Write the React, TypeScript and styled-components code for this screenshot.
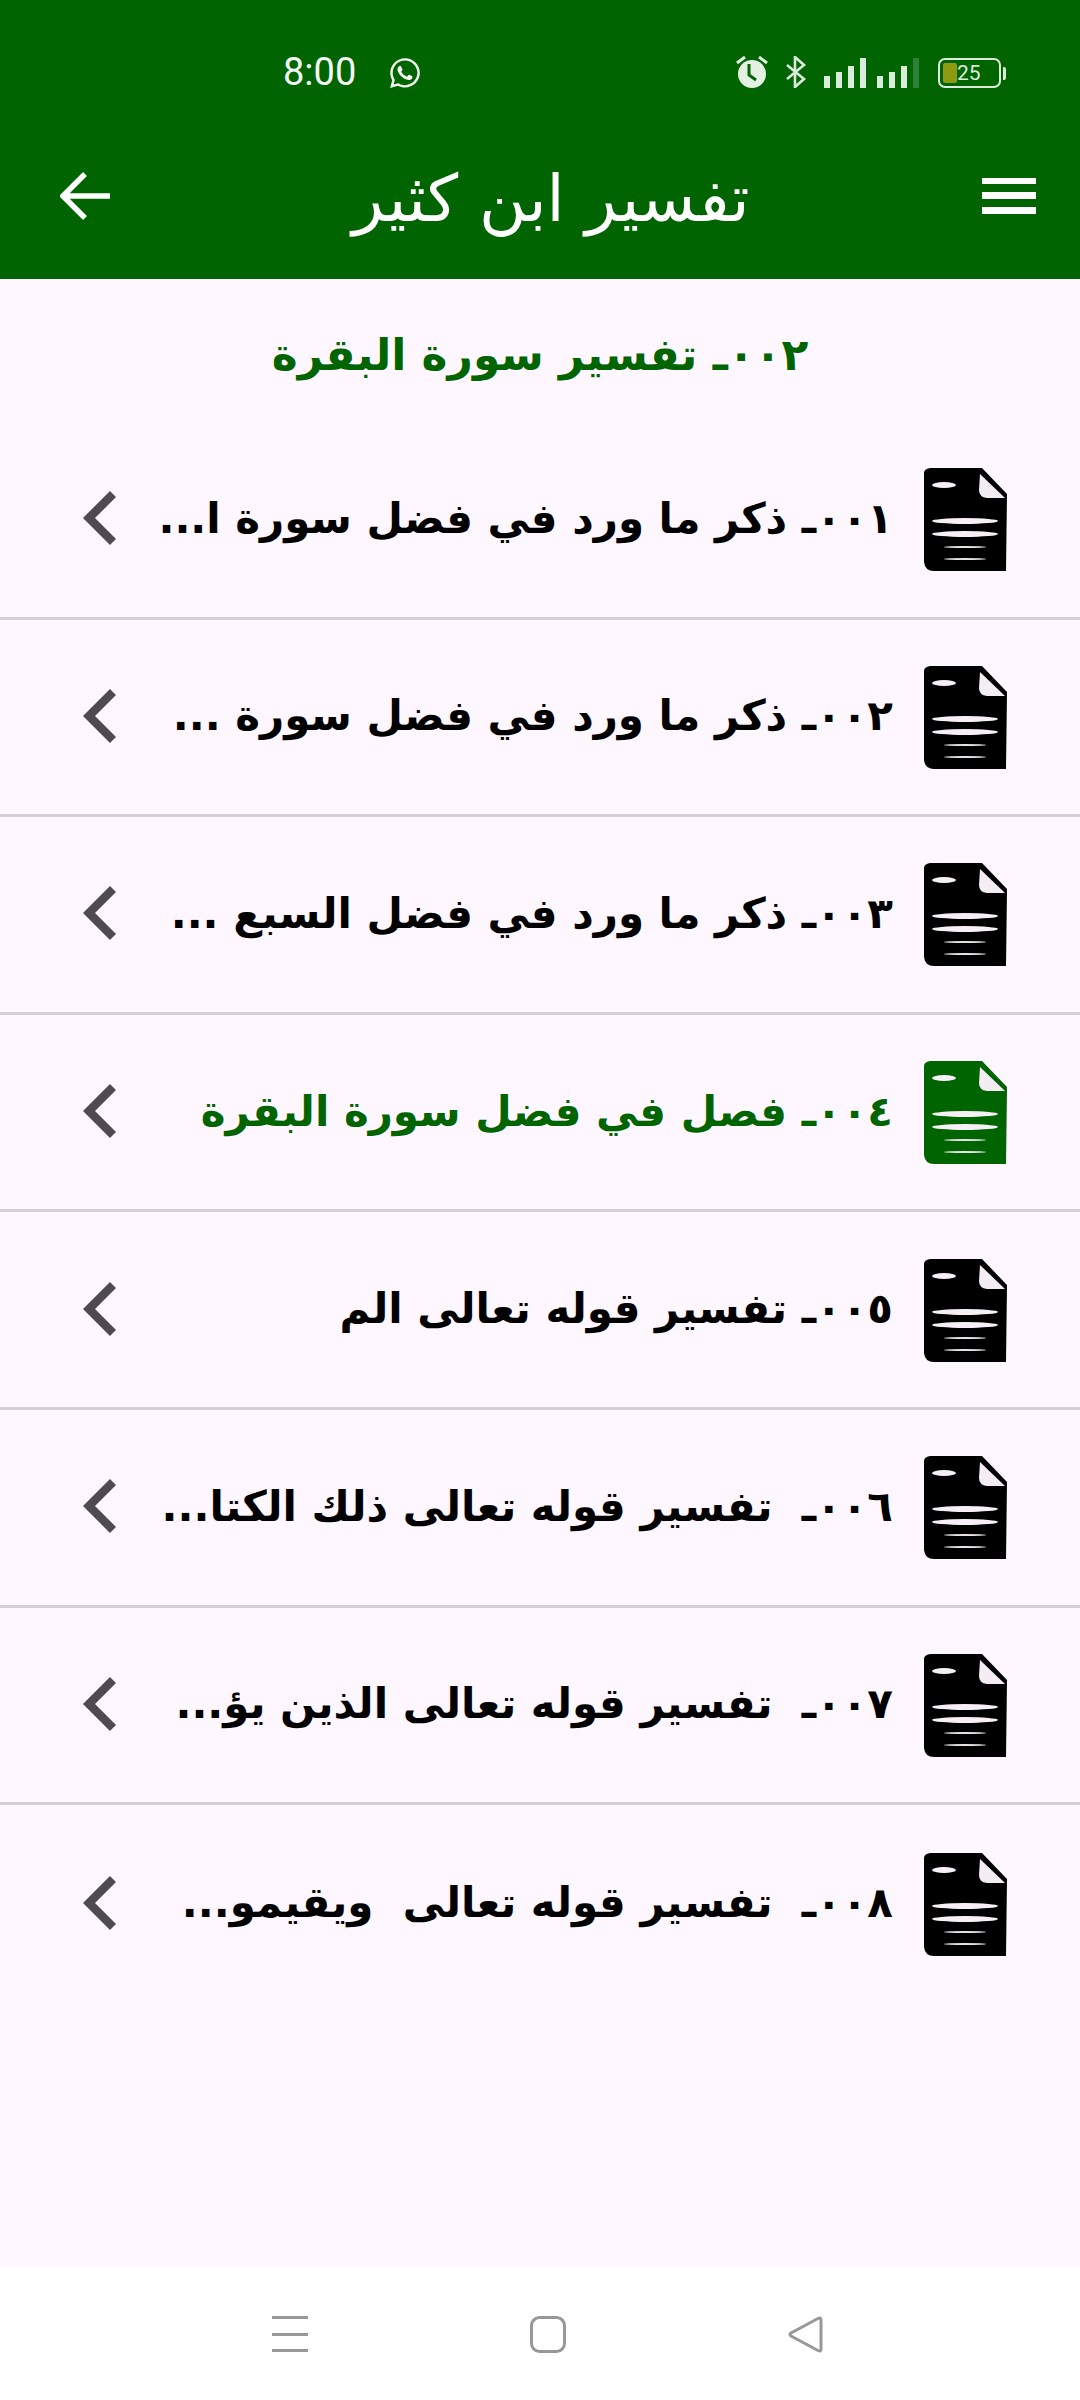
import React from 'react';
import styled, { createGlobalStyle } from 'styled-components';
import { FaWhatsapp } from 'react-icons/fa';

const GlobalStyle = createGlobalStyle`
  html, body {
    margin: 0;
    padding: 0;
    background: #fff7ff;
  }
  * {
    box-sizing: border-box;
  }
`;

const Page = styled.div`
  width: 1080px;
  height: 2400px;
  display: flex;
  flex-direction: column;
  background: #fff7ff;
  font-family: 'DejaVu Sans', sans-serif;
  overflow: hidden;
`;

const Header = styled.header`
  height: 279px;
  flex-shrink: 0;
  background: #006400;
  display: flex;
  flex-direction: column;
`;

const StatusBar = styled.div`
  height: 144px;
  padding: 56px 79px 0 283px;
  display: flex;
  align-items: flex-start;
  color: #e4f0e4;
`;

const Time = styled.span`
  font-family: Roboto, sans-serif;
  font-size: 38px;
  line-height: 32px;
  color: #f4f9f4;
  width: 105px;
`;

const WhatsappIcon = styled(FaWhatsapp)`
  width: 34px;
  height: 34px;
  color: #f4f9f4;
`;

const StatusIcons = styled.div`
  margin-left: auto;
  display: flex;
  align-items: flex-end;
  height: 32px;
`;

const AlarmIcon = styled.svg`
  width: 32px;
  height: 32px;
  margin-right: 18px;
`;

const BluetoothIcon = styled.svg`
  width: 20px;
  height: 32px;
  margin-right: 18px;
`;

const Signal = styled.div`
  display: flex;
  align-items: flex-end;
  gap: 6px;
  margin-right: 11px;
  height: 30px;
`;

const Bar = styled.span<{ $h: number; $dim?: boolean }>`
  width: 6px;
  height: ${({ $h }) => $h}px;
  background: ${({ $dim }) => ($dim ? '#2f8038' : '#dcecdc')};
`;

const Battery = styled.div`
  position: relative;
  width: 63px;
  height: 30px;
  margin-left: 8px;
  border: 2.5px solid #dcecdc;
  border-radius: 7px;
  display: flex;
  align-items: center;
  padding-left: 3px;
  &::after {
    content: '';
    position: absolute;
    left: 63px;
    top: 7px;
    width: 3px;
    height: 13px;
    border-radius: 0 2px 2px 0;
    background: #dcecdc;
  }
`;

const BatteryFill = styled.span`
  width: 14px;
  height: 20px;
  background: #8f9a10;
  border-radius: 2px;
`;

const BatteryText = styled.span`
  font-family: Roboto, sans-serif;
  font-size: 21px;
  line-height: 20px;
  color: #dcecdc;
`;

const AppBar = styled.div`
  flex: 1;
  padding: 0 44px 0 60px;
  display: flex;
  align-items: center;
  justify-content: space-between;
`;

const Title = styled.h1`
  margin: 0 0 0 10px;
  flex: 1;
  text-align: center;
  font-size: 65px;
  font-weight: 400;
  color: #fff;
  line-height: 1;
  direction: rtl;
  padding-bottom: 26px;
`;

const MenuIcon = styled.div`
  width: 54px;
  height: 36px;
  margin-top: -32px;
  display: flex;
  flex-direction: column;
  justify-content: space-between;
  span {
    height: 6.5px;
    background: #fff;
  }
`;

const BackIcon = styled.svg`
  width: 50px;
  height: 48px;
  margin-top: -32px;
`;

const Main = styled.main`
  flex: 1;
  display: flex;
  flex-direction: column;
`;

const SectionTitle = styled.h2`
  margin: 0;
  height: 143px;
  padding-top: 43px;
  text-align: center;
  direction: rtl;
  color: #006400;
  font-size: 44px;
  font-weight: 700;
  line-height: 66px;
`;

const List = styled.ul`
  list-style: none;
  margin: 0;
  padding: 0;
`;

const Row = styled.li`
  height: 197.6px;
  direction: rtl;
  padding: 2px 73px 0 82px;
  display: flex;
  align-items: center;
  border-bottom: 3px solid #d6d0d6;
  &:last-child {
    border-bottom: none;
  }
`;

const RowText = styled.span<{ $active?: boolean }>`
  flex: 1;
  margin: 0 31px 3px 0;
  font-size: 42px;
  font-weight: 700;
  line-height: 60px;
  white-space: pre;
  color: ${({ $active }) => ($active ? '#006400' : '#000')};
`;

const DocSvg = styled.svg`
  width: 83px;
  height: 104px;
  flex-shrink: 0;
`;

const ChevronSvg = styled.svg`
  width: 36px;
  height: 56px;
  flex-shrink: 0;
  margin-bottom: 2px;
`;

const NavBar = styled.nav`
  height: 133px;
  flex-shrink: 0;
  background: #fff;
  padding: 49px 256px 0 272px;
  display: flex;
  justify-content: space-between;
  align-items: flex-start;
`;

const NavLines = styled.div`
  width: 36px;
  height: 36px;
  display: flex;
  flex-direction: column;
  justify-content: space-between;
  span {
    height: 3px;
    background: #9a979a;
  }
`;

const NavIcon = styled.svg`
  width: 36px;
  height: 37px;
`;

const DocIcon: React.FC<{ color: string }> = ({ color }) => (
  <DocSvg viewBox="0 0 83 104">
    <path
      d="M6 0 L58 0 L83 26 L82 103 L10 103 Q1 103 0 94 L0 5 Q0 1 6 0 Z"
      fill={color}
    />
    <path d="M56 6 L81 30 L63 30 Q55 29 55 22 Z" fill="#f4eef4" />
    <ellipse cx="20" cy="17" rx="12" ry="3" fill="#f6f0f6" />
    <ellipse cx="41" cy="53" rx="33" ry="3" fill="#f6f0f6" />
    <ellipse cx="41" cy="66" rx="33" ry="3" fill="#f6f0f6" />
    <ellipse cx="41" cy="79" rx="21" ry="1" fill="#e8e2e8" />
    <ellipse cx="41" cy="91" rx="21" ry="1" fill="#e8e2e8" />
  </DocSvg>
);

const Chevron = () => (
  <ChevronSvg viewBox="0 0 36 56">
    <path d="M31 3 L7 27 L31 51" fill="none" stroke="#4f4a52" strokeWidth="8.5" />
  </ChevronSvg>
);

const rows = [
  { text: '٠٠١ـ ذكر ما ورد في فضل سورة ا...' },
  { text: '٠٠٢ـ ذكر ما ورد في فضل سورة ...' },
  { text: '٠٠٣ـ ذكر ما ورد في فضل السبع ...' },
  { text: '٠٠٤ـ فصل في فضل سورة البقرة', active: true },
  { text: '٠٠٥ـ تفسير قوله تعالى الم' },
  { text: '٠٠٦ـ  تفسير قوله تعالى ذلك الكتا...' },
  { text: '٠٠٧ـ  تفسير قوله تعالى الذين يؤ...' },
  { text: '٠٠٨ـ  تفسير قوله تعالى  ويقيمو...' },
];

export default function App() {
  return (
    <Page>
      <GlobalStyle />
      <Header>
        <StatusBar>
          <Time>8:00</Time>
          <WhatsappIcon />
          <StatusIcons>
            <AlarmIcon viewBox="0 0 32 32">
              <circle cx="16" cy="18" r="14" fill="#e4f0e4" />
              <path d="M13 8 L13 19 L20 24" fill="none" stroke="#006400" strokeWidth="3" />
              <path d="M1 7 L9 1 M31 7 L23 1" stroke="#e4f0e4" strokeWidth="3" />
            </AlarmIcon>
            <BluetoothIcon viewBox="0 0 20 32">
              <path
                d="M1 9 L18 23 L9 31 L9 1 L18 9 L1 23"
                fill="none"
                stroke="#dcecdc"
                strokeWidth="2.6"
              />
            </BluetoothIcon>
            <Signal>
              <Bar $h={12} />
              <Bar $h={16} />
              <Bar $h={22} />
              <Bar $h={30} />
            </Signal>
            <Signal>
              <Bar $h={12} />
              <Bar $h={16} />
              <Bar $h={22} />
              <Bar $h={30} $dim />
            </Signal>
            <Battery>
              <BatteryFill />
              <BatteryText>25</BatteryText>
            </Battery>
          </StatusIcons>
        </StatusBar>
        <AppBar>
          <BackIcon viewBox="0 0 50 48">
            <path
              d="M25 2 L3 24 L25 46 M3 24 L50 24"
              fill="none"
              stroke="#fff"
              strokeWidth="5.5"
            />
          </BackIcon>
          <Title>تفسير ابن كثير</Title>
          <MenuIcon>
            <span />
            <span />
            <span />
          </MenuIcon>
        </AppBar>
      </Header>
      <Main>
        <SectionTitle>٠٠٢ـ تفسير سورة البقرة</SectionTitle>
        <List>
          {rows.map((row) => (
            <Row key={row.text}>
              <DocIcon color={row.active ? '#006400' : '#000'} />
              <RowText $active={row.active}>{row.text}</RowText>
              <Chevron />
            </Row>
          ))}
        </List>
      </Main>
      <NavBar>
        <NavLines>
          <span />
          <span />
          <span />
        </NavLines>
        <NavIcon viewBox="0 0 36 37">
          <rect x="1.5" y="1.5" width="33" height="34" rx="8" fill="none" stroke="#9a979a" strokeWidth="3" />
        </NavIcon>
        <NavIcon viewBox="0 0 36 37">
          <path
            d="M33 4 Q33 1 30 2.5 L3 17 Q1 18.5 3 20 L30 34.5 Q33 36 33 33 Z"
            fill="none"
            stroke="#9a979a"
            strokeWidth="3"
          />
        </NavIcon>
      </NavBar>
    </Page>
  );
}
